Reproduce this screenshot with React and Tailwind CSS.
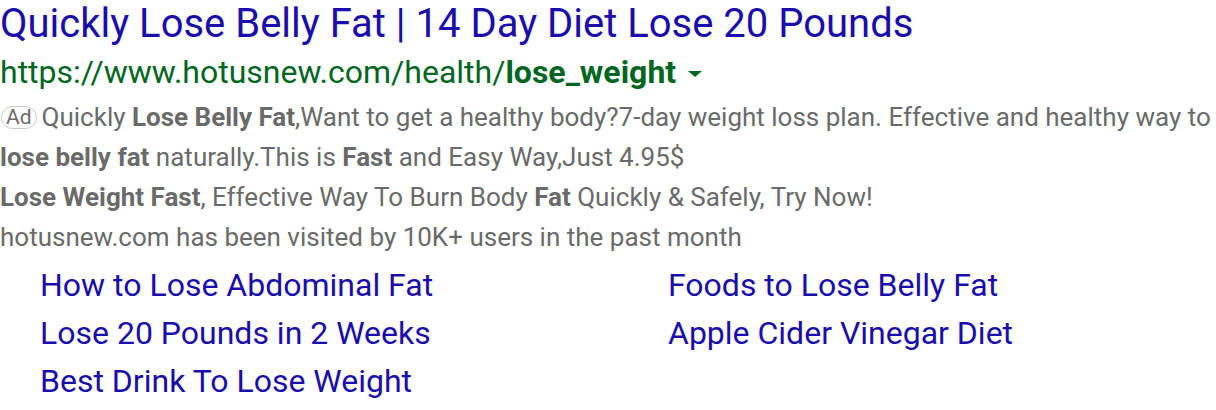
import React from "react";

export default function App() {
  const f = { fontFamily: "Roboto, 'Liberation Sans', sans-serif" };
  return (
    <div className="w-[1216px] h-[410px] bg-white overflow-hidden" style={f}>
      <div className="text-[40px] leading-[48px] text-[#1a0dab] whitespace-nowrap">
        Quickly Lose Belly Fat | 14 Day Diet Lose 20 Pounds
      </div>
      <div className="flex items-center h-[49px] text-[32px] leading-[49px] text-[#006621] whitespace-nowrap">
        <span>https://www.hotusnew.com/health/<b>lose_weight</b></span>
        <span className="ml-[12px] mt-[2px] w-0 h-0 border-l-[7px] border-r-[7px] border-t-[6px] border-l-transparent border-r-transparent border-t-[#006621]" />
      </div>
      <div className="text-[26px] leading-[40px] text-[#6a6a6a]">
        <div className="whitespace-nowrap">
          <span className="inline-block text-[21px] leading-[21px] px-[4px] border border-[#c8c8c8] rounded-[12px] align-[2px] ml-[1px] mr-[5px]">Ad</span>
          Quickly <b>Lose Belly Fat</b>,Want to get a healthy body?7-day weight loss plan. Effective and healthy way to
        </div>
        <div className="whitespace-nowrap">
          <b>lose belly fat</b> naturally.This is <b>Fast</b> and Easy Way,Just 4.95$
        </div>
        <div className="whitespace-nowrap">
          <b>Lose Weight Fast</b>, Effective Way To Burn Body <b>Fat</b> Quickly &amp; Safely, Try Now!
        </div>
        <div className="whitespace-nowrap">
          hotusnew.com has been visited by 10K+ users in the past month
        </div>
      </div>
      <div className="grid grid-cols-[628px_1fr] mt-[4px] pl-[40px] text-[32px] leading-[48px] text-[#1a0dab] whitespace-nowrap">
        <div>How to Lose Abdominal Fat</div>
        <div>Foods to Lose Belly Fat</div>
        <div>Lose 20 Pounds in 2 Weeks</div>
        <div>Apple Cider Vinegar Diet</div>
        <div>Best Drink To Lose Weight</div>
      </div>
    </div>
  );
}
